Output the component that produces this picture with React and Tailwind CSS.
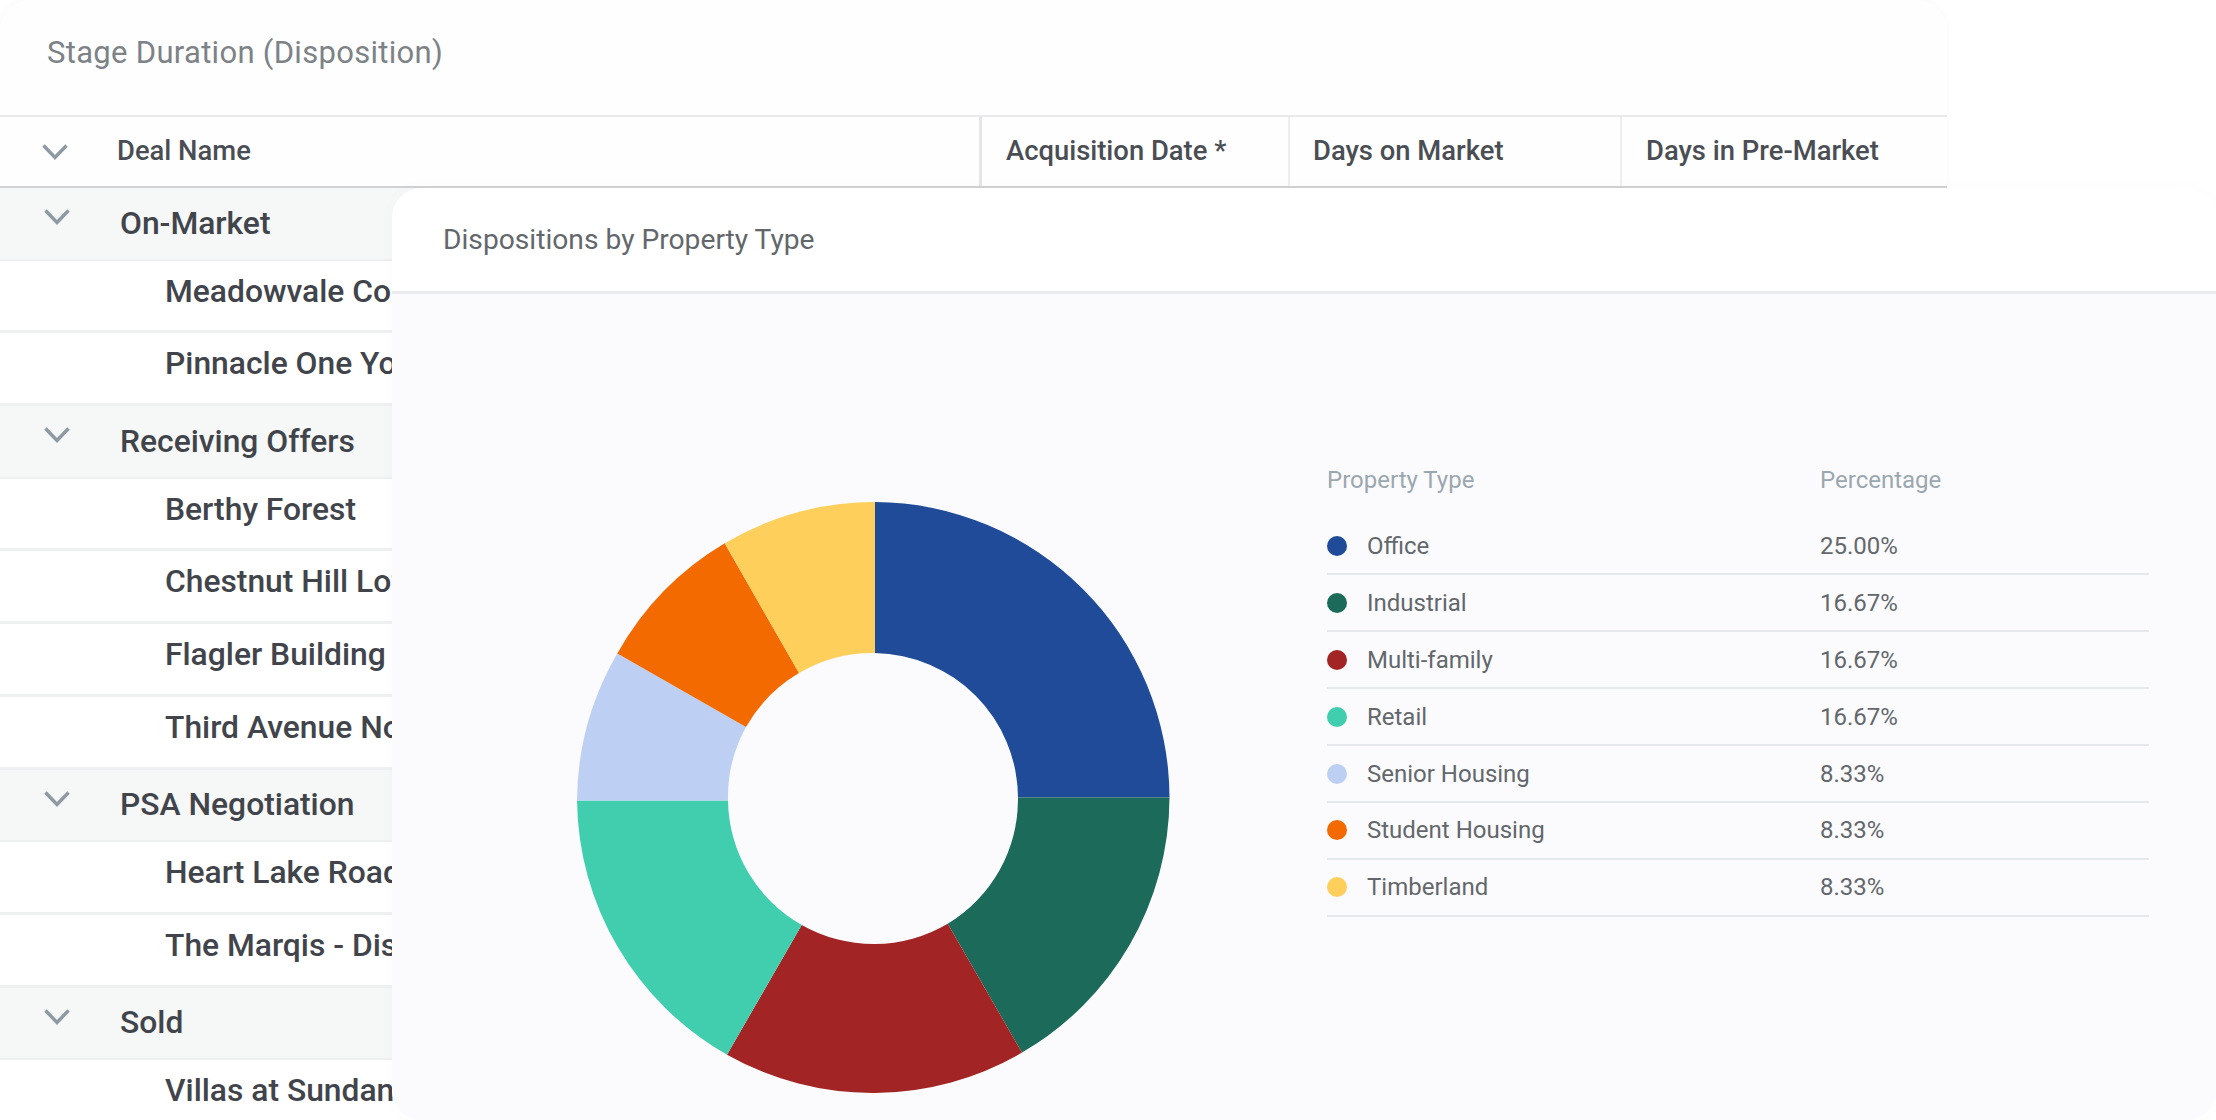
import React from "react";

const Chevron = ({ className }) => (
  <svg viewBox="0 0 26 16" className={className} fill="none" stroke="#8d9aa3" strokeWidth="3.4" strokeLinejoin="miter">
    <path d="M1.5 1.5 L13 13.5 L24.5 1.5" />
  </svg>
);

const groups = [
  { name: "On-Market", deals: ["Meadowvale Commons", "Pinnacle One Yonge"] },
  { name: "Receiving Offers", deals: ["Berthy Forest", "Chestnut Hill Lofts", "Flagler Building", "Third Avenue North"] },
  { name: "PSA Negotiation", deals: ["Heart Lake Road", "The Marqis - Disposition"] },
  { name: "Sold", deals: ["Villas at Sundance"] },
];

const legend = [
  ["Office", "25.00%", "bg-[#1f4b99]"],
  ["Industrial", "16.67%", "bg-[#1c6b5a]"],
  ["Multi-family", "16.67%", "bg-[#a32424]"],
  ["Retail", "16.67%", "bg-[#41ceae]"],
  ["Senior Housing", "8.33%", "bg-[#bdd0f4]"],
  ["Student Housing", "8.33%", "bg-[#f26a00]"],
  ["Timberland", "8.33%", "bg-[#ffcf5c]"],
];

// spoke between two slices: outer point, inner point
const spokes = [
  [298, 0, 298, 151],
  [592.5, 295.5, 441, 295.5],
  [445, 550.6, 370.7, 421.7],
  [150, 552.7, 224.7, 423],
  [0, 298.4, 151, 298.4],
  [40.3, 151.5, 169, 225],
  [147.7, 41.3, 222, 171],
];
const colors = ["#1f4b99", "#1c6b5a", "#a32424", "#41ceae", "#bdd0f4", "#f26a00", "#ffcf5c"];

const Donut = () => (
  <svg width="593" height="592" viewBox="0 0 593 592" className="block shrink-0">
    {spokes.map((s, i) => {
      const n = spokes[(i + 1) % spokes.length];
      const d = `M${s[0]} ${s[1]} A296.3 296.3 0 0 1 ${n[0]} ${n[1]} L${n[2]} ${n[3]} A145.3 145.3 0 0 0 ${s[2]} ${s[3]} Z`;
      return <path key={colors[i]} d={d} fill={colors[i]} />;
    })}
  </svg>
);

export default function App() {
  return (
    <div className="relative w-[2216px] h-[1120px] overflow-hidden bg-white font-['Roboto',sans-serif]">
      <div className="w-[1947px] h-[1200px] bg-[#fefefe] rounded-[30px] shadow-[0_0_8px_rgba(0,0,0,0.03)]">
        <div className="h-[115px] pl-[47px] pt-[32px] text-[31px] leading-[42px] tracking-[0.3px] text-[#7d8287]">
          Stage Duration (Disposition)
        </div>
        <div className="flex h-[73px] border-y-[2px] border-t-[#e9eaeb] border-b-[#cfd1d3] text-[27.4px] font-medium text-[#4a4e54]">
          <div className="flex items-center w-[982px] border-r-[3px] border-[#e3e5e6]">
            <Chevron className="w-[26px] h-[16px] ml-[42px]" />
            <span className="ml-[49px]">Deal Name</span>
          </div>
          <div className="flex items-center w-[308px] pl-[24px] border-r-[2px] border-[#eceeef]">Acquisition Date *</div>
          <div className="flex items-center w-[332px] pl-[23px] border-r-[2px] border-[#eceeef]">Days on Market</div>
          <div className="flex items-center flex-1 pl-[24px]">Days in Pre-Market</div>
        </div>
        {groups.map((g) => (
          <div key={g.name}>
            <div className="flex items-center h-[72.7px] bg-[#f6f7f7] border-b-[2px] border-[#eeeff0] text-[31.8px] font-medium text-[#41454b]">
              <Chevron className="w-[26px] h-[16px] ml-[44px] mb-[12px]" />
              <span className="ml-[50px]">{g.name}</span>
            </div>
            {g.deals.map((d) => (
              <div key={d} className="flex items-center h-[72.7px] pl-[165px] pb-[8px] bg-white border-b-[3px] border-[#eff0f1] text-[31.8px] font-medium text-[#41454b]">
                {d}
              </div>
            ))}
          </div>
        ))}
      </div>

      <div className="absolute left-[392px] top-[188px] w-[1824px] h-[932px] rounded-[30px] overflow-hidden bg-white shadow-[0_0_20px_rgba(0,0,0,0.02)]">
        <div className="flex items-center h-[106px] pl-[51px] pt-[2px] bg-white border-b-[3px] border-[#e9ebed] text-[28.2px] text-[#63676c]">
          Dispositions by Property Type
        </div>
        <div className="flex h-[826px] bg-[#fbfbfd] pl-[185px] pt-[208px]">
          <Donut />
          <div className="ml-[157px] w-[822px] -mt-[40px]">
            <div className="grid grid-cols-[493px_1fr] items-center h-[34px] mb-[22.6px] text-[24px] text-[#9ba7b0]">
              <span>Property Type</span>
              <span>Percentage</span>
            </div>
            {legend.map(([name, pct, dot]) => (
              <div key={name} className="grid grid-cols-[493px_1fr] items-center h-[56.9px] border-b-[2px] border-[#e6e9eb] text-[24px] text-[#63676c]">
                <span className="flex items-center">
                  <span className={`w-[20px] h-[20px] rounded-full ${dot}`} />
                  <span className="ml-[20px]">{name}</span>
                </span>
                <span>{pct}</span>
              </div>
            ))}
          </div>
        </div>
      </div>
    </div>
  );
}
